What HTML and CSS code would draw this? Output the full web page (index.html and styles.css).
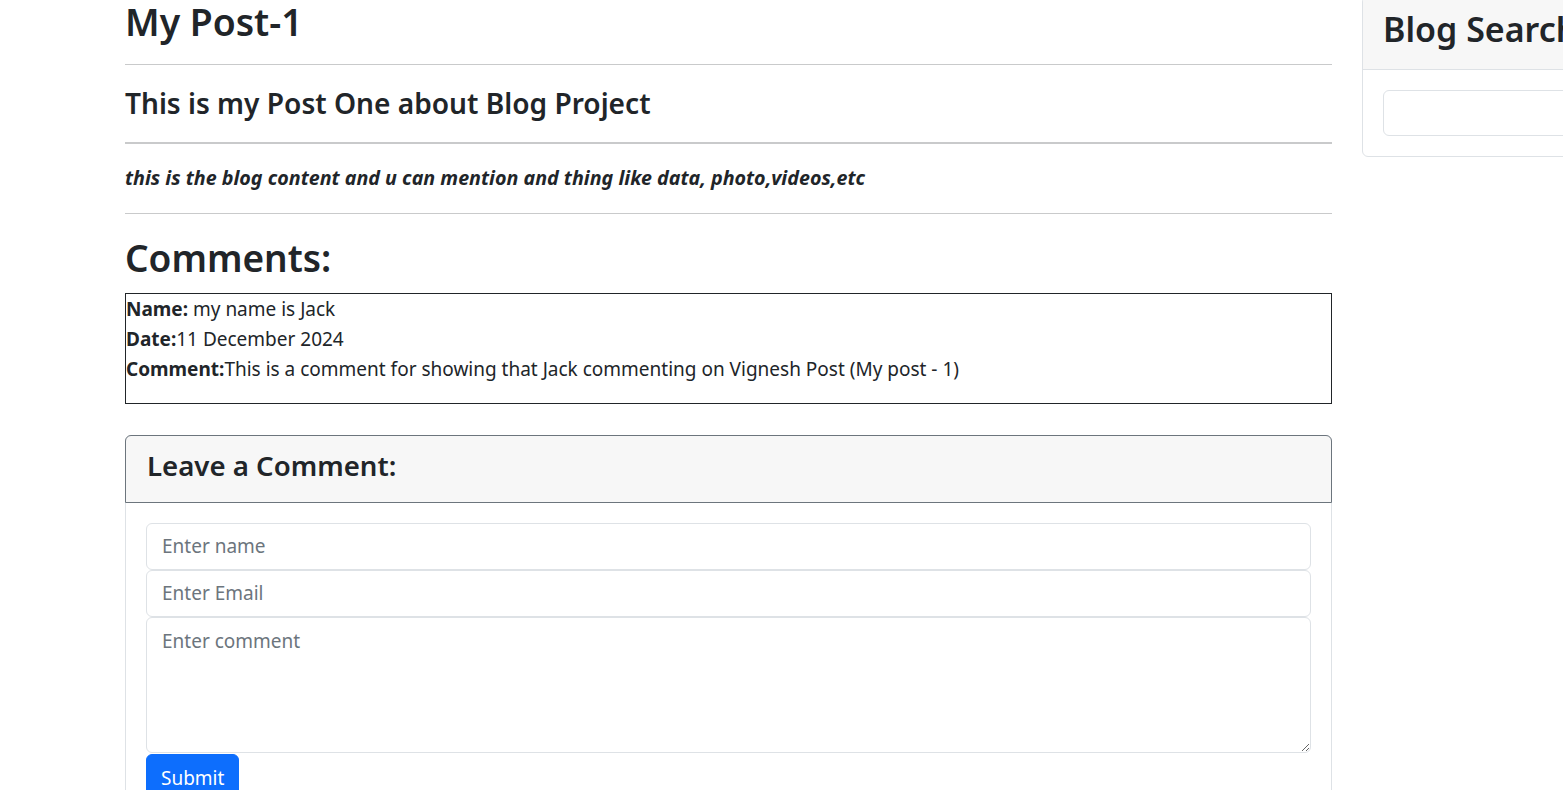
FILE: index.html
```html
<!DOCTYPE html>
<html lang="en">
<head>
<meta charset="utf-8">
<title>My Post-1</title>
<link rel="stylesheet" href="styles.css">
</head>
<body>
<div class="page">
  <main class="post">
    <h1 class="post-title">My Post-1</h1>
    <hr class="rule rule-first">
    <h3 class="post-sub">This is my Post One about Blog Project</h3>
    <hr class="rule rule-thick">
    <p class="post-body">this is the blog content and u can mention and thing like data, photo,videos,etc</p>
    <hr class="rule rule-after">
    <h1 class="comments-title">Comments:</h1>
    <div class="comment">
      <div class="comment-line"><strong>Name:</strong> my name is Jack</div>
      <div class="comment-line"><strong>Date:</strong>11 December 2024</div>
      <div class="comment-line"><strong>Comment:</strong>This is a comment for showing that Jack commenting on Vignesh Post (My post - 1)</div>
    </div>
    <section class="card leave">
      <div class="card-header dark">
        <h3 class="card-title">Leave a Comment:</h3>
      </div>
      <form class="card-body form">
        <input class="field" type="text" placeholder="Enter name">
        <input class="field" type="email" placeholder="Enter Email">
        <textarea class="field area" placeholder="Enter comment"></textarea>
        <button class="btn" type="button">Submit</button>
      </form>
    </section>
  </main>
  <aside class="side">
    <section class="card search">
      <div class="card-header">
        <h2 class="side-title">Blog Search</h2>
      </div>
      <div class="card-body">
        <input class="field search-field" type="text">
      </div>
    </section>
  </aside>
</div>
</body>
</html>
```
FILE: styles.css
```css
* { box-sizing: border-box; }
html, body { margin: 0; padding: 0; overflow: hidden; }
body {
  font-family: "Noto Sans", "Open Sans", sans-serif;
  color: #212529;
  background: #fff;
  font-size: 16px;
  line-height: 1.5;
}
.page {
  display: flex;
  gap: 30px;
  margin-left: 125px;
  margin-top: -4px;
  width: 1700px;
}
.post { width: 1207px; flex: none; }
.side { width: 420px; flex: none; }

h1, h2, h3 { font-weight: 600; line-height: 1.2; margin: 0; }

.post-title { font-size: 37.3px; margin-top: 3.5px; }
.rule { border: 0; border-top: 1px solid #c9cacb; margin: 0; }
.rule-first { margin-top: 20px; }
.post-sub { font-size: 28.1px; margin-top: 22px; }
.rule-thick { border-top-width: 2px; margin-top: 21px; }
.post-body {
  font-size: 19.7px;
  font-weight: 700;
  font-style: italic;
  margin: 20px 0 0;
  line-height: 27px;
}
.rule-after { margin-top: 22px; }
.comments-title { font-size: 37px; margin-top: 22.4px; }

.comment {
  margin-top: 12px;
  border: 1px solid #212529;
  font-size: 19px;
  line-height: 30px;
  padding-bottom: 19px;
}
.comment strong { font-weight: 700; }

.card {
  border: 1px solid #dee2e6;
  border-radius: 6px;
  background: #fff;
}
.leave { margin-top: 31px; }
.card-header {
  background: #f7f7f7;
  border-bottom: 1px solid #dee2e6;
  border-radius: 5px 5px 0 0;
  padding: 12px 20px;
}
.card-header.dark {
  border: 1px solid #6c757d;
  margin: -1px -1px 0;
  border-radius: 6px 6px 0 0;
  padding: 13px 21px 12px;
}
.card-title { font-size: 27.6px; margin-bottom: 8px; }
.card-body { padding: 20px; }
.form { display: flex; flex-direction: column; align-items: flex-start; }

.field {
  display: block;
  width: 100%;
  height: 47px;
  font-family: inherit;
  font-size: 19px;
  line-height: 30px;
  color: #212529;
  padding: 7px 15px;
  border: 1px solid #dee2e6;
  border-radius: 6px;
  background: #fff;
  outline: none;
}
.field::placeholder { color: #6c757d; opacity: 1; }
.area { height: 136px; resize: vertical; padding-top: 8px; }
.btn {
  margin-top: 1px;
  font-family: inherit;
  font-size: 19px;
  line-height: 30px;
  color: #fff;
  background: #0d6efd;
  border: 1px solid #0d6efd;
  border-radius: 6px;
  padding: 8px 14px;
}

.search .card-header { padding: 11.5px 20px 12px; }
.side-title { font-size: 34px; margin-bottom: 8px; }
.search-field { height: 46px; }
```
